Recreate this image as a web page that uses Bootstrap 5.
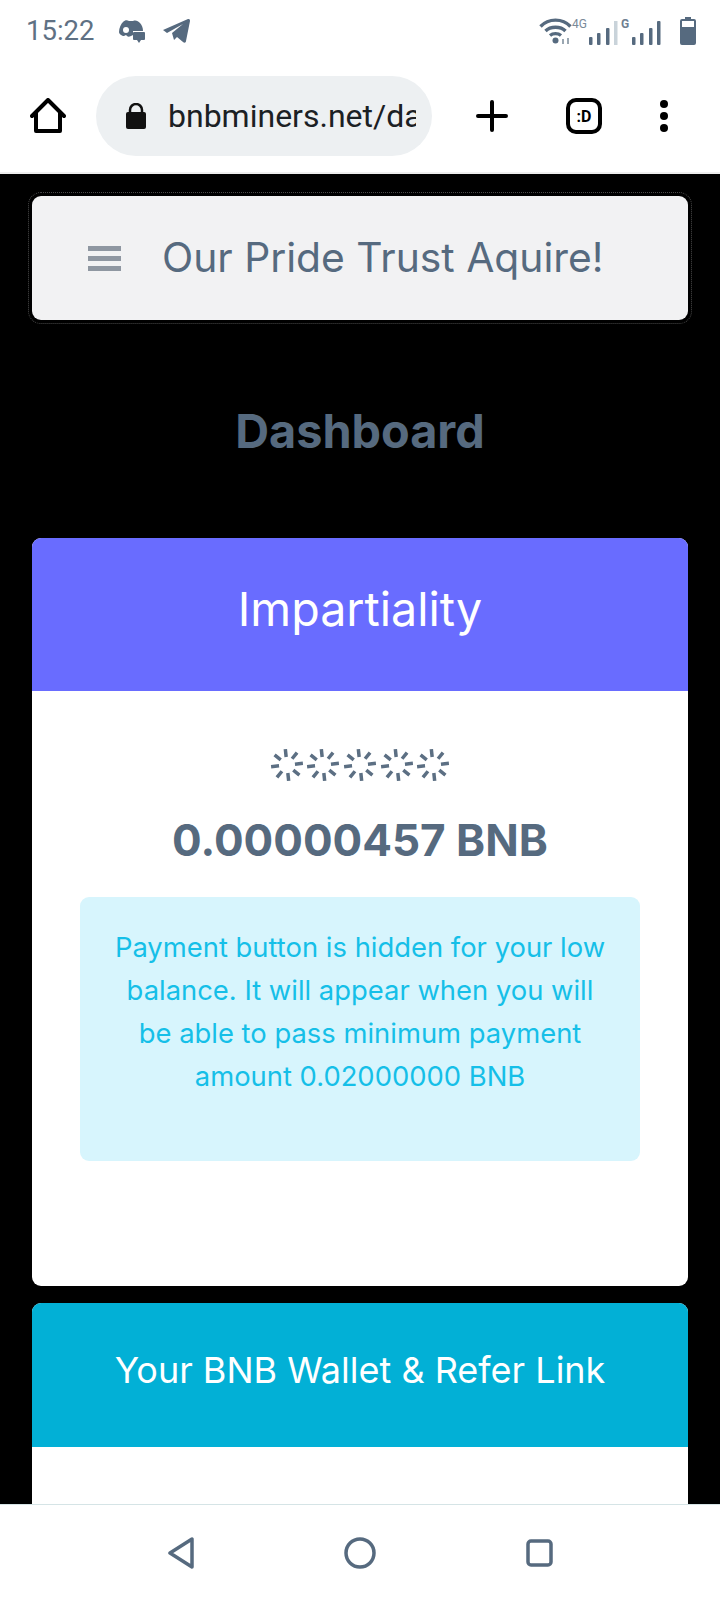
<!DOCTYPE html>
<html lang="en">
<head>
<meta charset="utf-8">
<title>Dashboard</title>
<link href="https://cdn.jsdelivr.net/npm/bootstrap@5.3.0/dist/css/bootstrap.min.css" rel="stylesheet">
<style>
html,body{height:1600px;overflow:hidden}
body{font-family:Inter,"Liberation Sans",sans-serif;color:#566a7f;background:#000}
.shell{height:1600px}
.status-strip{height:60px;padding:2px 24px 0 26px;background:#fff;font-family:Roboto,sans-serif}
.clock{font-size:27.5px;color:#5f7184;width:68px;line-height:1;margin-right:24px}
.game-ico{margin-right:17px}
.chrome-bar{height:114px;background:#fff;padding:0 0 0 30px;border-bottom:2px solid #eee}
.url-pill{width:336px;height:80px;border-radius:40px;background:#edf0f2;margin-left:30px;padding:0 16px 0 30px;overflow:hidden;font-family:Roboto,sans-serif;font-size:32px;color:#1b2024;white-space:nowrap}
.url-pill span{overflow:hidden;margin-left:22px}
.plus-ico{margin-left:44px}
.tab-ico{margin-left:58px}
.dots-ico{margin-left:58px}
.page-view{flex:1 1 auto;min-height:0;overflow:hidden;padding:22px 32px 0;background:#000}
.top-nav{height:124px;background:#f2f2f3;border-radius:9px;outline:1px dotted #4a4a4a;outline-offset:3px;padding:0 0 0 56px}
.burger{width:33px;height:25px;border-top:5px solid #8f97a1;border-bottom:5px solid #8f97a1;position:relative;margin-right:41px}
.burger::after{content:"";position:absolute;left:0;right:0;top:5px;height:5px;background:#8f97a1}
.brand-text{font-size:40.8px;font-weight:400;white-space:nowrap}
.page-title{font-size:46.8px;font-weight:700;color:#566a7f;text-align:center;line-height:1.2;margin:83px 0 79px}
.panel{border:0;border-radius:9px;overflow:hidden;margin-bottom:17px}
.panel-head{height:153px;padding-bottom:10px;background:#696cff;color:#fff;font-size:46.6px;line-height:1}
.panel-head.info-head{height:144px;background:#02b0d6;font-size:36px}
.panel-body{padding:57px 48px 0;height:595px}
.spin-row{gap:2.6px;height:38px}
.amount{font-size:44px;font-weight:700;line-height:1.2;margin:28px 0 30px;color:#566a7f}
.notice{background:#d7f5fd;color:#15bfe8;border-radius:9px;font-size:27.4px;line-height:43px;padding:29px 32px 63px;text-align:center;margin:0;border:0}
.nav-strip{height:96px;background:#fff;border-top:1px solid #d5e4e6}
.nav-mid{margin:0 150px}
.status-strip,.chrome-bar,.nav-strip{flex-shrink:0}
</style>
</head>
<body>
<div class="shell d-flex flex-column">
  <div class="status-strip d-flex align-items-center">
    <span class="clock">15:22</span>
    <svg class="game-ico" width="27" height="24" viewBox="0 0 27 24"><path fill="#566a7f" d="M5 3c2-2 4-2 6-1h4c3-1 5 0 7 2 2 2 3 5 3 8H15v4l-2 1c-2 1-3 1-4 0l-1-1-2 1c-2 0-5-2-5-4 0-4 2-8 4-10z"/><circle cx="8" cy="11" r="3" fill="#fff"/><path fill="#566a7f" d="M16 13h10a1 1 0 0 1 1 1v6a1 1 0 0 1-1 1h-3l-2 3-2-3h-3a1 1 0 0 1-1-1v-6a1 1 0 0 1 1-1z"/></svg>
    <svg width="28" height="24" viewBox="0 0 28 24" fill="#566a7f"><path d="M1 11 26 0c1 0 2 0 2 2l-4 20c0 2-2 2-3 1l-6-5-3 3-2-7L21 5 5 14z"/></svg>
    <span class="ms-auto d-flex align-items-end">
      <svg width="157" height="28" viewBox="0 0 157 28">
        <g fill="none" stroke="#566a7f" stroke-width="3.400"><path d="M1.500 9.500c8-8.500 22-8.500 30 0M6.500 14c5-5 15-5 20 0M11 18.500c3-2.500 8-2.500 11 0"/></g>
        <circle cx="16.500" cy="23.500" r="3" fill="#566a7f"/>
        <path d="M24 22v5M29 21v6" stroke="#7a8a99" stroke-width="1.500"/>
        <text x="33" y="11" font-family="Roboto,sans-serif" font-size="12" fill="#7a8a99">4G</text>
        <text x="82" y="11" font-family="Roboto,sans-serif" font-weight="700" font-size="12" fill="#6f8091">G</text>
        <g fill="#566a7f"><rect x="50" y="20" width="3.500" height="8" rx="1"/><rect x="58" y="16" width="3.500" height="12" rx="1"/><rect x="67" y="11" width="3.500" height="17" rx="1"/><rect x="93" y="20" width="3.500" height="8" rx="1"/><rect x="101" y="16" width="3.500" height="12" rx="1"/><rect x="110" y="11" width="3.500" height="17" rx="1"/><rect x="118" y="4" width="3.500" height="24" rx="1"/></g>
        <rect x="75" y="4" width="3.500" height="24" fill="#c9d3da"/>
        <path d="M146 0h6v2h3a2 2 0 0 1 2 2v22a2 2 0 0 1-2 2h-12a2 2 0 0 1-2-2V4a2 2 0 0 1 2-2h3z" fill="#566a7f"/>
        <rect x="143" y="4" width="12" height="6" fill="#fff"/>
      </svg>
    </span>
  </div>
  <div class="chrome-bar d-flex align-items-center">
    <svg width="36" height="36" viewBox="0 0 36 36" fill="none" stroke="#000" stroke-width="4" stroke-linejoin="round" stroke-linecap="round"><path d="M2 18 18 2l16 16M6 15v18h24V15"/></svg>
    <div class="url-pill d-flex align-items-center">
      <svg width="20" height="26" viewBox="0 0 20 26" fill="#111" class="flex-shrink-0"><rect x="0" y="9" width="20" height="17" rx="2"/><path d="M4 10V7a6 6 0 0 1 12 0v3" fill="none" stroke="#111" stroke-width="2.500"/></svg>
      <span>bnbminers.net/da</span>
    </div>
    <svg class="plus-ico" width="32" height="32" viewBox="0 0 32 32" stroke="#000" stroke-width="4" stroke-linecap="round"><path d="M16 2v28M2 16h28"/></svg>
    <svg class="tab-ico" width="36" height="36" viewBox="0 0 36 36"><rect x="2" y="2" width="32" height="32" rx="8" fill="none" stroke="#000" stroke-width="4"/><text x="18" y="24" text-anchor="middle" font-family="Roboto,sans-serif" font-size="16" font-weight="700">:D</text></svg>
    <svg class="dots-ico" width="8" height="32" viewBox="0 0 8 32" fill="#000"><circle cx="4" cy="4" r="4"/><circle cx="4" cy="16" r="4"/><circle cx="4" cy="28" r="4"/></svg>
  </div>
  <div class="page-view">
    <nav class="top-nav navbar d-flex flex-nowrap justify-content-start align-items-center">
      <span class="burger"></span>
      <span class="brand-text">Our Pride Trust Aquire!</span>
    </nav>
    <h4 class="page-title">Dashboard</h4>
    <div class="card panel">
      <div class="panel-head d-flex align-items-center justify-content-center">Impartiality</div>
      <div class="card-body panel-body text-center">
        <div class="spin-row d-flex justify-content-center">
          <svg width="34" height="34" viewBox="0 0 34 34" stroke="#5c6f83" stroke-width="3.500"><g transform="rotate(-6 17 17)"><path d="M17 1v8M17 25v8M1 17h8M25 17h8M5.700 5.700l5.600 5.600M22.700 22.700l5.600 5.600M28.300 5.700l-5.600 5.600M11.300 22.700l-5.600 5.600"/></g></svg>
          <svg width="34" height="34" viewBox="0 0 34 34" stroke="#5c6f83" stroke-width="3.500"><g transform="rotate(-6 17 17)"><path d="M17 1v8M17 25v8M1 17h8M25 17h8M5.700 5.700l5.600 5.600M22.700 22.700l5.600 5.600M28.300 5.700l-5.600 5.600M11.300 22.700l-5.600 5.600"/></g></svg>
          <svg width="34" height="34" viewBox="0 0 34 34" stroke="#5c6f83" stroke-width="3.500"><g transform="rotate(-6 17 17)"><path d="M17 1v8M17 25v8M1 17h8M25 17h8M5.700 5.700l5.600 5.600M22.700 22.700l5.600 5.600M28.300 5.700l-5.600 5.600M11.300 22.700l-5.600 5.600"/></g></svg>
          <svg width="34" height="34" viewBox="0 0 34 34" stroke="#5c6f83" stroke-width="3.500"><g transform="rotate(-6 17 17)"><path d="M17 1v8M17 25v8M1 17h8M25 17h8M5.700 5.700l5.600 5.600M22.700 22.700l5.600 5.600M28.300 5.700l-5.600 5.600M11.300 22.700l-5.600 5.600"/></g></svg>
          <svg width="34" height="34" viewBox="0 0 34 34" stroke="#5c6f83" stroke-width="3.500"><g transform="rotate(-6 17 17)"><path d="M17 1v8M17 25v8M1 17h8M25 17h8M5.700 5.700l5.600 5.600M22.700 22.700l5.600 5.600M28.300 5.700l-5.600 5.600M11.300 22.700l-5.600 5.600"/></g></svg>
        </div>
        <div class="amount">0.00000457 BNB</div>
        <div class="alert notice" role="alert">Payment button is hidden for your low balance. It will appear when you will be able to pass minimum payment amount 0.02000000 BNB</div>
      </div>
    </div>
    <div class="card panel">
      <div class="panel-head info-head d-flex align-items-center justify-content-center">Your BNB Wallet &amp; Refer Link</div>
      <div class="card-body panel-body"></div>
    </div>
  </div>
  <div class="nav-strip d-flex align-items-center justify-content-center">
    <svg width="26" height="32" viewBox="0 0 26 32" fill="none" stroke="#566a7f" stroke-width="3.500" stroke-linejoin="round"><path d="M24 2v28L2 16z"/></svg>
    <svg class="nav-mid" width="32" height="32" viewBox="0 0 32 32" fill="none" stroke="#566a7f" stroke-width="3.500"><circle cx="16" cy="16" r="14"/></svg>
    <svg width="27" height="28" viewBox="0 0 27 28" fill="none" stroke="#566a7f" stroke-width="3.500"><rect x="2" y="2" width="23" height="24" rx="3"/></svg>
  </div>
</div>
</body>
</html>
